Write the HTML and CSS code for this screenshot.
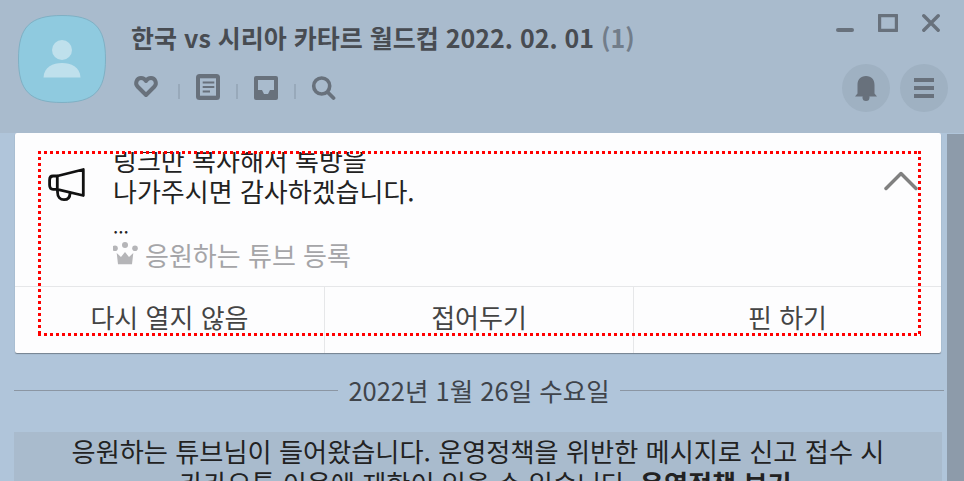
FILE: index.html
```html
<!DOCTYPE html>
<html lang="ko">
<head>
  <meta charset="UTF-8" />
  <title>한국 vs 시리아 카타르 월드컵</title>
  <link rel="stylesheet" href="styles.css">
</head>
<body>
  <header class="top">
    <div class="avatar">
      <svg width="88" height="88" viewBox="0 0 88 88">
        <path d="M44 .5C76 .5 87.500 12 87.500 44S76 87.500 44 87.500.5 76 .5 44 12 .5 44 .5Z" fill="#8fcadf" stroke="#7fb0c4"/>
        <circle cx="44" cy="35" r="10" fill="#bfe0ec"/>
        <path d="M25.500 62.500C26 52 35 48 44 48s18 4 18.500 14.500Z" fill="#bfe0ec"/>
      </svg>
    </div>
    <div class="room-info">
      <h1 class="room-title">한국 vs 시리아 카타르 월드컵 2022. 02. 01 <span class="room-count">(1)</span></h1>
      <div class="room-tools">
        <svg class="tool" width="31" height="26" viewBox="0 0 31 26">
          <path d="M14 21 5.500 12.500C2.500 9 5 4 9 4c2.300 0 4 1.200 5 3 1-1.800 2.700-3 5-3 4 0 6.500 5 3.500 8.500Z" fill="none" stroke="#68717c" stroke-width="4" stroke-linejoin="round"/>
        </svg>
        <i class="sep"></i>
        <svg class="tool" width="26" height="26" viewBox="0 0 26 26">
          <rect x="1" y="0" width="24" height="26" rx="3.500" fill="#68717c"/>
          <rect x="5" y="4.300" width="16" height="17.400" fill="#a9bbcd"/>
          <path d="M7.700 7.500h11.600v2H7.700zM7.700 12h11.600v2H7.700zM7.700 16.500H15v2H7.700z" fill="#68717c"/>
        </svg>
        <i class="sep"></i>
        <svg class="tool" width="26" height="26" viewBox="0 0 26 26">
          <rect x="1" y="2" width="24" height="24" rx="2" fill="#68717c"/>
          <path d="M5 6h16v10h-4l-2 4h-4l-2-4H5Z" fill="#a9bbcd"/>
        </svg>
        <i class="sep"></i>
        <svg class="tool" width="26" height="26" viewBox="0 0 26 26">
          <circle cx="10.700" cy="12" r="8" fill="none" stroke="#68717c" stroke-width="3.600"/>
          <path d="M17 18.500l5.500 5.500" stroke="#68717c" stroke-width="3.800" stroke-linecap="round"/>
        </svg>
      </div>
    </div>
    <div class="top-right">
      <div class="win-btns">
        <svg width="18" height="18" viewBox="0 0 18 18"><path d="M2 16h14" stroke="#68717c" stroke-width="4" stroke-linecap="round"/></svg>
        <svg width="20" height="18" viewBox="0 0 20 18"><rect x="1.500" y="1.500" width="17" height="15" fill="none" stroke="#68717c" stroke-width="3.400" stroke-linejoin="round"/></svg>
        <svg width="18" height="18" viewBox="0 0 18 18"><path d="M1.800 1.800l14.400 14.400M16.200 1.800 1.800 16.200" stroke="#68717c" stroke-width="3.400" stroke-linecap="round"/></svg>
      </div>
      <div class="round-btns">
        <div class="round-btn">
          <svg width="22" height="25" viewBox="0 0 22 25">
            <path d="M11 0c5.500 0 8.500 3.500 8.500 9v8.500L22 20.500H0l2.500-3V9C2.500 3.500 5.500 0 11 0Z" fill="#68717c"/>
            <circle cx="11" cy="21.500" r="3.500" fill="#68717c"/>
          </svg>
        </div>
        <div class="round-btn">
          <svg width="20" height="20" viewBox="0 0 20 20"><path d="M0 0h20v4H0zM0 8h20v4H0zM0 16h20v4H0z" fill="#68717c"/></svg>
        </div>
      </div>
    </div>
  </header>

  <div class="body-wrap">
    <main class="chat">
      <section class="notice">
        <div class="notice-main">
          <svg class="megaphone" width="40" height="38" viewBox="0 0 40 38">
            <path d="M37.300 4.500 11.300 11H7C4.500 11 3.600 13 3.600 15v5c0 2.500 1 4.300 3.500 4.300h4.200l26 6.200ZM11.300 11v13.300M11.500 24.500V27c0 5 3 7.700 6.500 7.700s6-2 6-6.500" fill="none" stroke="#111" stroke-width="2.800" stroke-linejoin="round" stroke-linecap="round"/>
          </svg>
          <div class="notice-text">
            <p class="notice-line">링크만 복사해서 톡방을</p>
            <p class="notice-line">나가주시면 감사하겠습니다.</p>
            <p class="notice-dots">...</p>
            <div class="cheer">
              <svg class="crown" width="27" height="24" viewBox="0 0 27 24">
                <circle cx="13" cy="3" r="3" fill="#b5b5b8"/>
                <circle cx="3" cy="6.300" r="2.800" fill="#b5b5b8"/>
                <circle cx="23" cy="6.300" r="2.800" fill="#b5b5b8"/>
                <path d="M4.700 11 9 15l4-5 4 5 4.300-4L20 22.300H6Z" fill="#b5b5b8"/>
              </svg>
              <span>응원하는 튜브 등록</span>
            </div>
          </div>
          <svg class="chevron" width="34" height="20" viewBox="0 0 34 20">
            <path d="M2 17.500 17 2.500l15 15" fill="none" stroke="#808080" stroke-width="3.500" stroke-linecap="round" stroke-linejoin="round"/>
          </svg>
        </div>
        <div class="notice-actions">
          <div class="notice-action">다시 열지 않음</div>
          <div class="notice-action">접어두기</div>
          <div class="notice-action">핀 하기</div>
        </div>
        <div class="focus-outline"></div>
      </section>

      <div class="date-line"><span>2022년 1월 26일 수요일</span></div>

      <div class="sys-msg">
        응원하는 튜브님이 들어왔습니다. 운영정책을 위반한 메시지로 신고 접수 시<br>
        &nbsp;&nbsp;카카오톡 이용에 제한이 있을 수 있습니다. <b>운영정책 보기</b>
      </div>
    </main>
    <div class="scrollbar"></div>
  </div>
</body>
</html>
```

FILE: styles.css
```css
* { margin: 0; padding: 0; box-sizing: border-box; }
html, body {
  width: 964px;
  height: 481px;
  overflow: hidden;
}
body {
  font-family: 'Noto Sans CJK KR', 'Noto Sans', sans-serif;
  background-color: #b0c5da;
  color: #333;
}
.top {
  display: flex;
  height: 133px;
  background: #a9bbcd;
  padding: 14px 16px 0 18px;
}
.avatar {
  width: 88px;
  height: 88px;
  margin-top: 1px;
}
.room-info {
  margin-left: 25px;
  flex-grow: 1;
}
.room-title {
  font-size: 25px;
  line-height: 34px;
  margin-top: 6px;
  font-weight: 700;
  color: #484c52;
}
.room-count {
  color: #727d8a;
}
.room-tools {
  display: flex;
  margin-top: 20px;
  margin-left: 1px;
  height: 26px;
}
.tool { display: block; flex-shrink: 0; }
.sep {
  width: 2px;
  height: 15px;
  background: #98a9ba;
  margin: 10px 15px 0;
}
.top-right {
  width: 120px;
}
.win-btns {
  display: flex;
  justify-content: flex-end;
  gap: 24px;
  padding-right: 8px;
}
.round-btns {
  display: flex;
  justify-content: flex-end;
  gap: 10px;
  margin-top: 32px;
}
.round-btn {
  width: 48px;
  height: 48px;
  border-radius: 50%;
  background: #9fb1c2;
  display: flex;
  align-items: center;
  justify-content: center;
}
.body-wrap {
  display: flex;
  height: 348px;
  overflow: hidden;
}
.chat {
  width: 947px;
  padding: 0 3px 0 14px;
}
.scrollbar {
  width: 17px;
  margin-top: 1px;
  background: #8d9baa;
}
.notice {
  position: relative;
  margin-left: 1px;
  margin-right: 3px;
  height: 220px;
  background: #fdfdfe;
  border-radius: 2px;
  box-shadow: 0 1px 1px rgba(0,0,0,0.35);
  display: flex;
  flex-direction: column;
}
.notice-main {
  display: flex;
  height: 154px;
  padding-top: 19px;
  padding-left: 31px;
  border-bottom: 1px solid #e6e7e9;
}
.megaphone { margin-top: 13px; flex-shrink: 0; }
.notice-text {
  margin-left: 27px;
  height: 134px;
  overflow: hidden;
  flex-grow: 1;
}
.notice-line {
  font-size: 26px;
  line-height: 31px;
  color: #222;
  position: relative;
  top: -8px;
}
.notice-dots {
  font-size: 19px;
  line-height: 24px;
  color: #222;
}
.cheer {
  display: flex;
  align-items: center;
  gap: 6px;
  font-size: 26px;
  line-height: 30px;
  color: #a5a5a8;
  margin-top: 2px;
}
.crown {
  align-self: flex-start;
  margin: 2px 0 0 -1px;
}
.chevron {
  margin: 19px 23px 0 0;
}
.notice-actions {
  display: grid;
  grid-template-columns: 309px 309px 1fr;
  flex-grow: 1;
}
.notice-action {
  text-align: center;
  font-size: 26px;
  line-height: 60px;
  color: #444;
  border-left: 1px solid #e6e7e9;
}
.notice-action:first-child { border-left: none; }
.focus-outline {
  position: absolute;
  left: 23px;
  top: 18px;
  width: 883px;
  height: 185px;
  background:
    linear-gradient(90deg, #f00 50%, transparent 50%) left top / 6px 3px repeat-x,
    linear-gradient(90deg, #f00 50%, transparent 50%) left bottom / 6px 3px repeat-x,
    linear-gradient(#f00 50%, transparent 50%) left top / 3px 6px repeat-y,
    linear-gradient(#f00 50%, transparent 50%) right top / 3px 6px repeat-y;
}
.date-line {
  display: flex;
  align-items: center;
  gap: 10px;
  margin-top: 21px;
  height: 32px;
  font-size: 25.500px;
  line-height: 32px;
  color: #3f444a;
}
.date-line::before,
.date-line::after {
  content: "";
  flex: 1;
  height: 1px;
  background: #8b96a3;
}
.sys-msg {
  margin-top: 26px;
  background: #a9bbcd;
  text-align: center;
  font-size: 26.200px;
  line-height: 32px;
  color: #222;
  height: 80px;
  width: 928px;
  padding-top: 3px;
}
```
